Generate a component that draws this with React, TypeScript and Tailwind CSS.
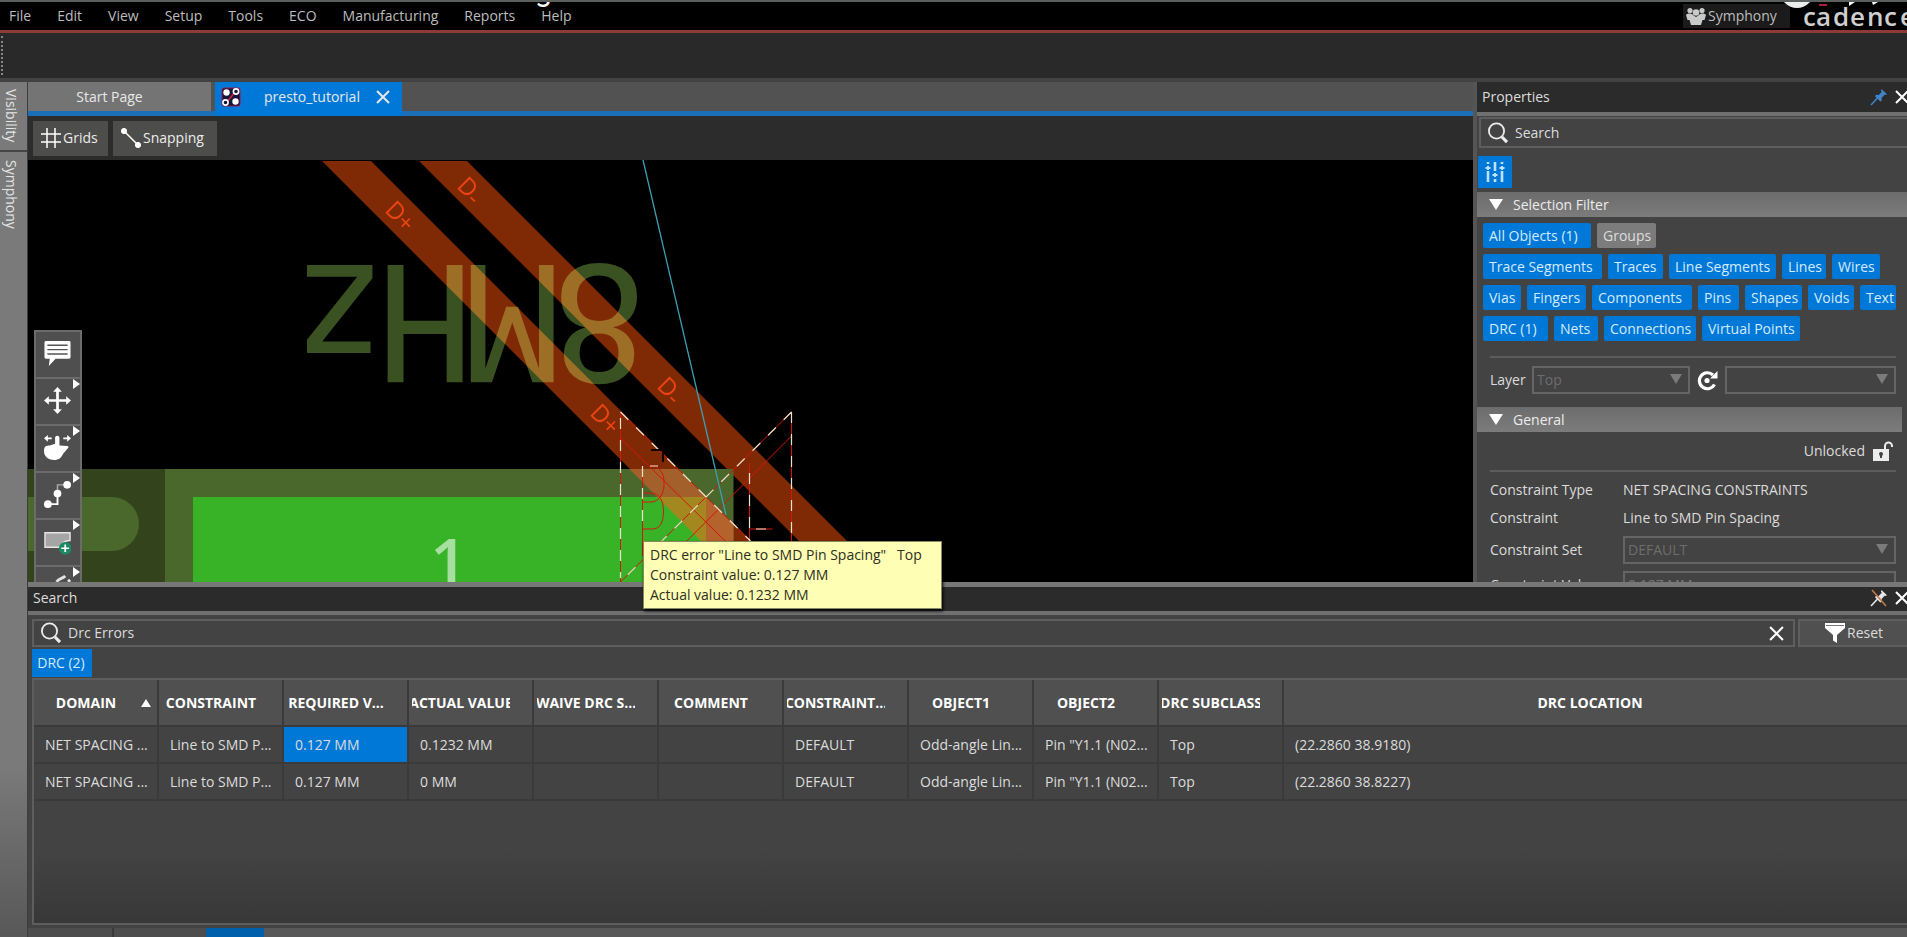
import type { ReactNode } from "react";
import { clsx } from "clsx";

const menus = ["File", "Edit", "View", "Setup", "Tools", "ECO", "Manufacturing", "Reports", "Help"];

const filterRows = [
  [
    { label: "All Objects (1)", width: "w-[108px]" },
    { label: "Groups", width: "w-[59px]", off: true },
  ],
  [
    { label: "Trace Segments", width: "w-[119px]" },
    { label: "Traces", width: "w-[55px]" },
    { label: "Line Segments", width: "w-[107px]" },
    { label: "Lines", width: "w-[44px]" },
    { label: "Wires", width: "w-[48px]" },
  ],
  [
    { label: "Vias", width: "w-[38px]" },
    { label: "Fingers", width: "w-[59px]" },
    { label: "Components", width: "w-[100px]" },
    { label: "Pins", width: "w-[41px]" },
    { label: "Shapes", width: "w-[57px]" },
    { label: "Voids", width: "w-[46px]" },
    { label: "Text", width: "w-[36px]" },
  ],
  [
    { label: "DRC (1)", width: "w-[65px]" },
    { label: "Nets", width: "w-[44px]" },
    { label: "Connections", width: "w-[92px]" },
    { label: "Virtual Points", width: "w-[98px]" },
  ],
];

const columns = [
  "DOMAIN",
  "CONSTRAINT",
  "REQUIRED V...",
  "ACTUAL VALUE",
  "WAIVE DRC S...",
  "COMMENT",
  "CONSTRAINT...",
  "OBJECT1",
  "OBJECT2",
  "DRC SUBCLASS",
  "DRC LOCATION",
];

const rows = [
  ["NET SPACING ...", "Line to SMD P...", "0.127 MM", "0.1232 MM", "", "", "DEFAULT", "Odd-angle Lin...", 'Pin "Y1.1 (N02...', "Top", "(22.2860 38.9180)"],
  ["NET SPACING ...", "Line to SMD P...", "0.127 MM", "0 MM", "", "", "DEFAULT", "Odd-angle Lin...", 'Pin "Y1.1 (N02...', "Top", "(22.2860 38.8227)"],
];

function SearchIcon() {
  return (
    <svg viewBox="0 0 22 22" className="size-[22px] shrink-0" fill="none" stroke="#ececec">
      <circle cx="9.5" cy="9" r="7.6" strokeWidth="1.8" />
      <path d="M15 15l5 5.2" strokeWidth="3.2" />
    </svg>
  );
}

function CloseIcon({ className }: { className: string }) {
  return (
    <svg viewBox="0 0 14 14" className={className} fill="none" stroke="currentColor" strokeWidth="2">
      <path d="M1 1l12 12M13 1L1 13" />
    </svg>
  );
}

function PinIcon({ off }: { off?: boolean }) {
  return (
    <svg viewBox="0 0 18 18" className="h-[18px] w-[18px]" fill={off ? "#e6e6e6" : "#3f83c8"}>
      <path d="M11.5 1l5.5 5.2-1.6.8-.8-.3-3 3.2.2 2.6-1.5 1L5 8.2l1.1-1.4 2.6.2 3.1-3.2-.9-1.1z" />
      <path d="M7.5 10L1 17" stroke={off ? "#e6e6e6" : "#3f83c8"} strokeWidth="1.6" />
      {off && <path d="M2 1l14 16" stroke="#c07a4a" strokeWidth="1.6" />}
    </svg>
  );
}

function Caret() {
  return (
    <svg viewBox="0 0 12 10" className="pointer-events-none absolute right-2 top-2 h-[10px] w-[12px]" fill="#7b7b7b">
      <path d="M0 0h12L6 10z" />
    </svg>
  );
}

function DropDown({ id, label, value, className }: { id: string; label?: string; value: string; className?: string }) {
  return (
    <div className={clsx("relative", className)}>
      <select
        id={id}
        aria-label={label}
        disabled
        className="block h-7 w-full appearance-none border-2 border-[#656565] bg-[#434343] px-[3px] text-sm leading-5 text-[#6d6d6d] opacity-100"
      >
        <option>{value}</option>
      </select>
      <Caret />
    </div>
  );
}

function SectionHeader({ title, className }: { title: string; className?: string }) {
  return (
    <button className={clsx("flex h-[25px] shrink-0 items-center gap-[10px] bg-linear-to-b from-[#6c6c6c] to-[#7c7c7c] pl-3 text-left text-[#ececec]", className)}>
      <svg viewBox="0 0 14 11" className="h-[11px] w-[14px]" fill="#fff">
        <path d="M0 0h14L7 11z" />
      </svg>
      {title}
    </button>
  );
}

function MenuBar() {
  return (
    <header className="relative flex h-[33px] shrink-0 items-center overflow-hidden border-b-[3px] border-t-2 border-b-[#8e3a38] border-t-[#5c615f] bg-black text-[#bdbdbd]">
      <nav className="flex gap-[26px] pl-[9px]">
        {menus.map((menu) => (
          <button key={menu}>{menu}</button>
        ))}
      </nav>
      <button className="ml-auto flex h-6 w-[107px] items-center gap-[2px] bg-[#1b1b1b] pl-[3px]">
        <svg viewBox="0 0 20 18" className="h-[18px] w-5" fill="#c9c9c9">
          <circle cx="4" cy="3.5" r="2.6" />
          <circle cx="16" cy="3.5" r="2.6" />
          <circle cx="10" cy="5.5" r="3.3" />
          <path d="M0 8c1-2 6-2 7 0l3 2 3-2c1-2 6-2 7 0l-1.5 5h-2L15 18H5l-1.5-5h-2z" />
        </svg>
        Symphony
      </button>
      {/* brand mark runs off the right edge */}
      <svg className="ml-[13px] h-7 w-[104px] shrink-0" fill="#cfcfcf">
        <text x="0 13 30 47 64 81 97" y="24" fontSize="26" fontWeight="600" fontFamily="'Open Sans', sans-serif">
          cadence
        </text>
        <path d="M16 3h8" stroke="#a3213f" strokeWidth="2" />
      </svg>
      <span className="absolute -top-[27px] left-[535px] font-[Roboto,sans-serif] text-[30px] leading-8 text-white">g</span>
      <span className="absolute -top-[28px] left-[1780px] size-[34px] rounded-full bg-[#ececec]" />
      <svg className="absolute left-[1846px] top-0 h-[4px] w-8" fill="#fff">
        <path d="M3 0h6L3 4zM26 0h6l-5 3z" />
      </svg>
    </header>
  );
}

function SideTabs() {
  return (
    <aside className="flex w-7 shrink-0 flex-col border-r border-[#3d3d3d] bg-linear-to-b from-[#7a7a7a] from-80% to-[#585858] text-[#e4e4e4]">
      <button className="flex h-[70px] items-center justify-center border-b-2 border-[#454545] pr-[5px] [writing-mode:vertical-rl]">Visibility</button>
      <button className="flex h-[84px] items-center justify-center pr-[5px] [writing-mode:vertical-rl]">Symphony</button>
    </aside>
  );
}

function EditorTabs() {
  return (
    <div className="flex h-[34px] shrink-0 items-start gap-1 border-b-[5px] border-[#1b6fb8] bg-[#525252] text-[#e8e8e8]">
      <button className="h-[29px] w-[183px] bg-[#747474] pr-[20px]">Start Page</button>
      <div className="flex h-[34px] w-[187px] shrink-0 items-center bg-[#0078d7] pl-[6px] pb-1">
        <svg viewBox="0 0 20 20" className="h-5 w-5">
          <rect x="1" y="1" width="18" height="18" rx="2" fill="#15163a" stroke="#a3154c" />
          <path d="M6 15l8-10" stroke="#d8213b" strokeWidth="1.5" />
          <circle cx="5.5" cy="5.5" r="3.2" fill="#fff" />
          <circle cx="14.5" cy="14.5" r="3.2" fill="#fff" />
          <circle cx="15" cy="4.5" r="2.6" fill="#15163a" stroke="#fff" strokeWidth="1.6" />
          <circle cx="4.5" cy="15.5" r="2.6" fill="#15163a" stroke="#fff" strokeWidth="1.6" />
        </svg>
        <button className="ml-[23px]">presto_tutorial</button>
        <button aria-label="Close tab" className="ml-auto mr-3">
          <CloseIcon className="size-[14px]" />
        </button>
      </div>
    </div>
  );
}

function ViewBar() {
  return (
    <div className="flex h-[44px] shrink-0 items-center gap-[5px] bg-[#2c2c2c] px-[5px] text-[#ececec]">
      <button className="flex h-[35px] w-[75px] items-center gap-[2px] bg-[#4d4d4b] pl-2">
        <svg viewBox="0 0 20 20" className="size-5" fill="none" stroke="#fff" strokeWidth="1.5">
          <path d="M6 0v20M14 0v20M0 6h20M0 14h20" />
        </svg>
        Grids
      </button>
      <button className="flex h-[35px] w-[104px] items-center gap-[2px] bg-[#4d4d4b] pl-2">
        <svg viewBox="0 0 20 20" className="size-5" fill="#fff" stroke="#fff">
          <path d="M3 3l14 14" strokeWidth="1.5" />
          <circle cx="3" cy="3" r="2.6" />
          <circle cx="17" cy="17" r="2.6" />
        </svg>
        Snapping
      </button>
    </div>
  );
}

const tools: { name: string; icon: ReactNode }[] = [
  {
    name: "Comment",
    icon: (
      <>
        <path d="M2 1h24a1.5 1.5 0 011.5 1.500V18a1.5 1.5 0 01-1.5 1.500H12L5 27l1-7.500H2A1.5 1.5 0 01.5 18V2.500A1.5 1.5 0 012 1z" />
        <path d="M3.5 5.500h21M3.500 10h21M3.500 14.500h21" stroke="#555" strokeWidth="1.5" />
      </>
    ),
  },
  {
    name: "Move",
    icon: (
      <>
        <path d="M14 4v20M4 14h20" stroke="#fff" strokeWidth="2.8" />
        <path d="M14 0l4.500 5h-9zM14 28l4.500-5h-9zM0 14l5-4.500v9zM28 14l-5-4.500v9z" />
      </>
    ),
  },
  {
    name: "Slide",
    icon: (
      <>
        <path d="M11.500 4c0-3 4.500-3 4.500 0v8l8 .5c2 .3 1.500 1.500.5 2.500l-5 6c-1.500 3.500-4 6-9 6C4 27 0 23 0 18c0-5 2-6 6-6l5.500-2z" />
        <path d="M3 4.500h5M20 4.500h5" stroke="#fff" strokeWidth="2" />
        <path d="M0 4.500L4 1v7zM28 4.500L24 1v7z" />
      </>
    ),
  },
  {
    name: "Route",
    icon: (
      <>
        <path d="M4 24h10V13" stroke="#fff" strokeWidth="2" fill="none" />
        <path d="M14 13V4h9" stroke="#aaa" strokeWidth="1.5" fill="none" />
        <circle cx="4" cy="24" r="4" />
        <circle cx="14" cy="13" r="4" />
        <circle cx="24" cy="4" r="4" />
      </>
    ),
  },
  {
    name: "Add shape",
    icon: (
      <>
        <path d="M1 5h26v8c-7 0-8 3-10 7H1z" fill="#a5a5a5" stroke="#e4e4e4" strokeWidth="1.5" />
        <circle cx="22" cy="21" r="6.5" fill="#1e8a63" />
        <path d="M22 17v8M18 21h8" stroke="#fff" strokeWidth="1.8" />
      </>
    ),
  },
  {
    name: "Arc",
    icon: <path d="M13 7c3-4 6-3 9-6M25 7l2-2" stroke="#e4e4e4" strokeWidth="3" fill="none" />,
  },
];

function ToolPalette() {
  return (
    <div className="absolute bottom-0 left-[6px] top-[170px] flex w-12 flex-col overflow-hidden border-2 border-b-0 border-[#6b6b6b] bg-[#4f4f4f]">
      {tools.map((tool, i) => (
        <button key={tool.name} aria-label={tool.name} className="relative flex h-[47px] w-full shrink-0 items-center justify-center border-b-2 border-[#6b6b6b] pb-[3px] pr-[2px]">
          <svg viewBox="0 0 28 28" className="size-[27px]" fill="#fff">
            {tool.icon}
          </svg>
          {i > 0 && (
            <svg viewBox="0 0 7 10" className="absolute right-0 top-0 h-[10px] w-[7px]" fill="#fff">
              <path d="M0 0l7 5-7 5z" />
            </svg>
          )}
        </button>
      ))}
    </div>
  );
}

function Board() {
  return (
    <svg className="isolate block h-full w-full bg-black font-['Open_Sans',sans-serif]">
      <defs>
        <clipPath id="trace">
          <path d="M294 0h49l380 382h-49z" />
        </clipPath>
      </defs>

      {/* traces and pads */}
      <g fill="#7f2a05">
        <path d="M294 1h49l400 400h-49z" />
        <path d="M391 1h48l400 400h-48z" />
      </g>
      <path d="M0 309h137v120H0z" fill="#33441c" />
      <path d="M0 337h84a27 27 0 010 54H0z" fill="#4a672c" />
      <path d="M137 309h568.500v120H137z" fill="#4a672c" />
      <path d="M165 337h513v92H165z" fill="#38b328" />
      <g clipPath="url(#trace)">
        <path d="M500 309h205.500v28H500z" fill="#a3602a" />
        <path d="M500 337h178v60H500z" fill="#a3871f" />
        <path d="M678 337h27.500v60H678z" fill="#b3632b" />
      </g>

      {/* silkscreen, seen from the far side */}
      <g className="mix-blend-screen" fill="#3a5122">
        <text transform="translate(571 105) rotate(180)" x="0 87 174 259" y="0" textAnchor="middle" fontSize="160" fontFamily="'DejaVu Sans Mono', monospace">
          8MHz
        </text>
      </g>

      <g fill="#ee4412" fontSize="24">
        <text transform="translate(367 51) rotate(45)" x="-8 9" y="8 9">D+</text>
        <text transform="translate(439 27) rotate(45)" x="-8 9" y="8 11">D-</text>
        <text transform="translate(572 254) rotate(45)" x="-8 9" y="8 9">D+</text>
        <text transform="translate(639 227) rotate(45)" x="-8 9" y="8 11">D-</text>
      </g>
      <text x="402" y="426" fontSize="66" fontWeight="600" fill="#a6df9f">1</text>

      {/* DRC bow-tie marker */}
      <g fill="none" stroke="#d5160c" strokeWidth="1">
        <path d="M592.5 252v170M592.5 252l130 129M763.5 252v130M763.5 252L592.5 422" />
        <path d="M592.5 278l120 118M763.5 276L630 410M721.5 303v78M721.5 369h23" />
        <path d="M614.5 306v90M623 306c9 0 13 8 13 16v4c0 5-4 16-13 16h-8M614.5 333h8c9 0 13 8 13 18 0 12-4 18-11 18h-10" />
      </g>
      <g fill="none" stroke="#efe2cc" strokeWidth="1.2" strokeDasharray="11 11">
        <path d="M592.5 258v160M592.5 252l130 129M763.5 252v130M763.5 252L592.5 422M721.5 313v68M614.5 306v60" />
        <path d="M728 369h10M622 306h8" strokeDasharray="none" />
      </g>
      <path d="M623 290h12v12" fill="none" stroke="#120404" strokeWidth="2" />
      <path d="M615 0l83 355" stroke="#3f9fb0" strokeWidth="1.3" />
    </svg>
  );
}

function DrcTooltip() {
  return (
    <div role="tooltip" className="absolute left-[615px] top-[381px] z-10 h-[68px] w-[299px] whitespace-pre border border-[#8a8a60] bg-[#feffb4] px-[6px] pt-[3px] leading-5 text-[#2e2e22] shadow-[1px_2px_3px_#000]">
      {'DRC error "Line to SMD Pin Spacing"   Top\nConstraint value: 0.127 MM\nActual value: 0.1232 MM'}
    </div>
  );
}

function PropertiesPanel() {
  return (
    <section className="flex w-[434px] shrink-0 flex-col overflow-hidden border-l-4 border-[#555] bg-[#434343] text-[#dcdcdc]">
      <div className="flex h-[30px] shrink-0 items-center bg-[#2b2b2b] pl-[5px]">
        <h2 className="flex-1">Properties</h2>
        <button aria-label="Pin panel">
          <PinIcon />
        </button>
        <button aria-label="Close panel" className="-mr-[2px] ml-[7px] text-white">
          <CloseIcon className="size-[14px]" />
        </button>
      </div>
      <div className="h-1 shrink-0 bg-[#707070]" />
      <label className="ml-[2px] mt-px flex h-[31px] shrink-0 items-center gap-[6px] border-y-2 border-l-2 border-[#5e5e5e] pl-[6px]">
        <SearchIcon />
        <input placeholder="Search" aria-label="Search properties" className="min-w-0 flex-1 bg-transparent outline-none placeholder:text-[#dcdcdc]" />
      </label>
      <button aria-label="Filters" className="ml-px mt-2 flex h-8 w-[34px] shrink-0 items-center justify-center bg-[#0078d7]">
        <svg viewBox="0 0 20 20" className="size-5" fill="none" stroke="#bfe0ff" strokeWidth="2.6">
          <path d="M3 0v2M3 9v11M10 0v9M10 17v3M17 0v2M17 9v11" />
          <path d="M3 4v4M10 11v4M17 4v4M.5 6h5M7.500 13h5M14.500 6h5" strokeWidth="2" />
        </svg>
      </button>
      <SectionHeader title="Selection Filter" className="mt-1" />
      <div className="mt-[6px] flex flex-col gap-[6px] pl-[6px]">
        {filterRows.map((row) => (
          <div key={row[0].label} className="flex gap-[6px]">
            {row.map((chip) => (
              <button
                key={chip.label}
                className={clsx("h-[25px] whitespace-nowrap rounded-[2px] pl-[6px] text-left", chip.width, "off" in chip && chip.off ? "bg-[#7c7c7c]" : "bg-[#0078d7] text-[#d5ebff]")}
              >
                {chip.label}
              </button>
            ))}
          </div>
        ))}
      </div>
      <div className="ml-[13px] mr-[11px] mt-[15px] flex items-center border-t-2 border-[#5c5c5c] pt-2">
        <label htmlFor="layer" className="w-[42px]">Layer</label>
        <DropDown id="layer" value="Top" className="w-[158px]" />
        <button aria-label="Reload layers" className="mx-[7px]">
          <svg viewBox="0 0 21 21" className="size-[21px]" fill="none" stroke="#fff" strokeWidth="3.2">
            <path d="M17.500 14.500A8 8 0 1116 5" />
            <path d="M20.500 1v7.500H13z" fill="#fff" stroke="none" />
            <circle cx="10" cy="10.5" r="2.6" fill="#fff" stroke="none" />
          </svg>
        </button>
        <DropDown id="sublayer" label="Sublayer" value="" className="flex-1" />
      </div>
      <SectionHeader title="General" className="mr-[5px] mt-[13px]" />
      <div className="ml-[13px] mr-[11px] flex h-[40px] shrink-0 items-center justify-end gap-2 border-b-2 border-[#5c5c5c]">
        Unlocked
        <svg viewBox="0 0 20 20" className="mr-[3px] size-5" fill="#ececec">
          <path d="M0 8h16v12H0z" />
          <path d="M12 8V5a3.5 3.5 0 017 0v1" fill="none" stroke="#ececec" strokeWidth="2" />
          <circle cx="8" cy="13" r="2" fill="#434343" />
          <path d="M8 13v4" stroke="#434343" strokeWidth="2" />
        </svg>
      </div>
      <div className="ml-[13px] mr-[11px] grid grid-cols-[133px_1fr] items-center pt-1">
        <span className="leading-[28px]">Constraint Type</span>
        <span>NET SPACING CONSTRAINTS</span>
        <span className="leading-[28px]">Constraint</span>
        <span>Line to SMD Pin Spacing</span>
        <label htmlFor="cset" className="leading-[35px]">Constraint Set</label>
        <DropDown id="cset" value="DEFAULT" />
        <label htmlFor="cvalue" className="leading-[35px]">Constraint Value</label>
        <input id="cvalue" readOnly value="0.127 MM" className="h-7 w-full border-2 border-[#656565] bg-transparent px-[3px] text-[#777]" />
      </div>
    </section>
  );
}

function ResultsTable() {
  return (
    <table className="w-full table-fixed border-collapse">
      <thead>
        <tr className="h-[46px] bg-[#505050] text-white">
          {columns.map((name, i) => (
            <th
              key={name}
              className={clsx("relative border-b-2 border-[#3a3a3a] p-0 font-bold", i === 0 && "w-[124px]", i > 0 && i < 10 && "w-[125px]", i < 10 && "border-r-2")}
            >
              <div className={clsx("ml-[3px] flex justify-center overflow-hidden whitespace-nowrap", i < 10 ? "mr-[22px]" : "mr-[14px]")}>{name}</div>
              {i === 0 && (
                <svg viewBox="0 0 10 8" className="absolute right-[6px] top-[19px] h-2 w-[10px]" fill="#fff">
                  <path d="M5 0l5 8H0z" />
                </svg>
              )}
            </th>
          ))}
        </tr>
      </thead>
      <tbody>
        {rows.map((row, r) => (
          <tr key={r} className="h-[37px]">
            {row.map((cell, c) => (
              <td
                key={c}
                className={clsx("overflow-hidden whitespace-nowrap border-b-2 border-[#3a3a3a] p-0 pl-[11px]", c < 10 && "border-r-2", r === 0 && c === 2 && "bg-[#0078d7]")}
              >
                {cell}
              </td>
            ))}
          </tr>
        ))}
      </tbody>
    </table>
  );
}

function SearchPanel() {
  return (
    <section className="flex min-h-0 flex-[7] flex-col overflow-hidden bg-[#434343] text-[#dcdcdc]">
      <div className="flex h-6 shrink-0 items-center bg-[#2b2b2b] pb-[2px] pl-[5px]">
        <h2 className="flex-1">Search</h2>
        <button aria-label="Pin panel">
          <PinIcon off />
        </button>
        <button aria-label="Close panel" className="-mr-[2px] ml-[7px] text-white">
          <CloseIcon className="size-[14px]" />
        </button>
      </div>
      <div className="mb-1 h-[4px] shrink-0 bg-[#707070]" />
      <div className="ml-1 flex h-7 shrink-0 gap-[3px]">
        <label className="flex min-w-0 flex-1 items-center gap-[6px] border-2 border-[#5e5e5e] pl-[6px] pr-[9px]">
          <SearchIcon />
          <input defaultValue="Drc Errors" aria-label="Search" className="min-w-0 flex-1 bg-transparent outline-none" />
          <button aria-label="Clear search" className="text-white">
            <CloseIcon className="size-[15px]" />
          </button>
        </label>
        <button className="flex w-[109px] items-center gap-[2px] border-2 border-r-0 border-[#5e5e5e] bg-[#505050] pl-[25px]">
          <svg viewBox="0 0 20 20" className="size-5" fill="#fff">
            <path d="M0 0h20v5l-8 7v8l-4-2.500V12L0 5z" />
            <path d="M1 2.500h18" stroke="#777" />
          </svg>
          Reset
        </button>
      </div>
      <button className="ml-1 mt-[2px] h-7 w-[60px] shrink-0 bg-[#0078d7] pr-[2px] text-[#d5ebff]">DRC (2)</button>
      <div className="ml-1 mt-px min-h-0 flex-1 overflow-hidden border-b-2 border-l-2 border-t-2 border-[#5e5e5e] bg-linear-to-b from-[#434343] from-70% to-[#383838]">
        <ResultsTable />
      </div>
      <div className="mt-[3px] flex h-[9px] shrink-0 bg-[#585858]">
        <button aria-label="Command" className="w-[86px] border-r-2 border-[#3a3a3a] bg-[#4d4d4d]" />
        <button aria-label="Session log" className="w-[92px] bg-[#4d4d4d]" />
        <button aria-label="Results" className="w-[58px] bg-[#0060ac]" />
      </div>
    </section>
  );
}

export default function App() {
  return (
    <div className="flex h-screen flex-col overflow-hidden bg-[#434343] font-['Open_Sans','Noto_Sans',sans-serif] text-sm">
      <MenuBar />
      <div className="flex h-[49px] shrink-0 border-b-4 border-[#424242] bg-[#292929] py-[3px]">
        <div className="w-[3px] border-r-2 border-dotted border-[#888]" />
      </div>
      <div className="flex min-h-0 flex-1">
        <SideTabs />
        <div className="flex min-w-0 flex-1 flex-col">
          <div className="flex min-h-0 flex-[10]">
            <main className="flex min-w-0 flex-1 flex-col">
              <EditorTabs />
              <ViewBar />
              <div className="relative min-h-0 flex-1">
                <Board />
                <ToolPalette />
                <DrcTooltip />
              </div>
            </main>
            <PropertiesPanel />
          </div>
          <div className="h-[5px] shrink-0 bg-[#777]" />
          <SearchPanel />
        </div>
      </div>
    </div>
  );
}
